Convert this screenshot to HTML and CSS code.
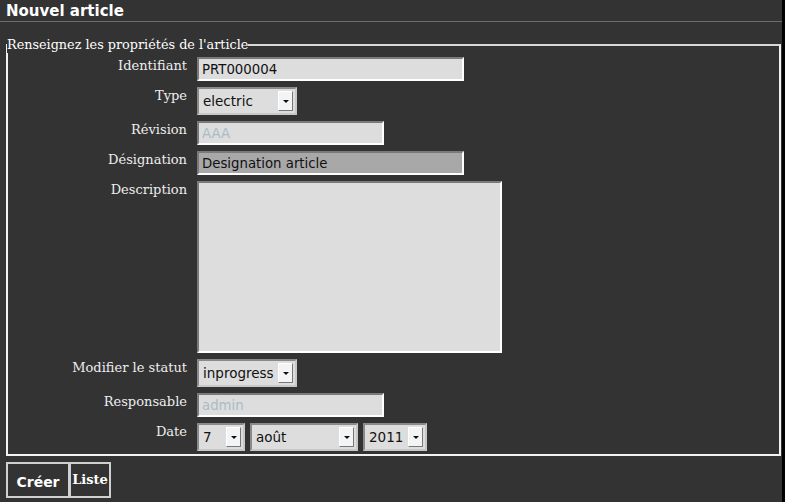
FILE: index.html
```html
<!DOCTYPE html>
<html lang="fr">
<head>
<meta charset="utf-8">
<title>Nouvel article</title>
<link rel="stylesheet" href="styles.css">
</head>
<body>
<div class="page">
  <h1 class="title">Nouvel article</h1>
  <form class="form">
    <fieldset class="props">
      <legend class="legend">Renseignez les propriétés de l'article</legend>
      <div class="row">
        <label class="lbl">Identifiant</label>
        <input class="field w-long" type="text" value="PRT000004">
      </div>
      <div class="row">
        <label class="lbl">Type</label>
        <span class="select w-sel"><span class="val">electric</span><span class="arrow"></span></span>
      </div>
      <div class="row">
        <label class="lbl">Révision</label>
        <input class="field w-mid" type="text" placeholder="AAA">
      </div>
      <div class="row">
        <label class="lbl">Désignation</label>
        <input class="field w-long dark" type="text" value="Designation article">
      </div>
      <div class="row">
        <label class="lbl">Description</label>
        <textarea class="field area"></textarea>
      </div>
      <div class="row">
        <label class="lbl">Modifier le statut</label>
        <span class="select w-sel"><span class="val">inprogress</span><span class="arrow"></span></span>
      </div>
      <div class="row">
        <label class="lbl">Responsable</label>
        <input class="field w-mid" type="text" placeholder="admin">
      </div>
      <div class="row">
        <label class="lbl">Date</label>
        <div class="dates">
          <span class="select w-day"><span class="val">7</span><span class="arrow"></span></span>
          <span class="select w-month"><span class="val">août</span><span class="arrow"></span></span>
          <span class="select w-year"><span class="val">2011</span><span class="arrow"></span></span>
        </div>
      </div>
    </fieldset>
    <div class="buttons">
      <button class="btn create" type="button">Créer</button>
      <button class="btn list" type="button">Liste</button>
    </div>
  </form>
</div>
</body>
</html>
```
FILE: styles.css
```css
html {
  background: #000;
  margin: 0;
  padding: 0;
}
body {
  margin: 0;
  padding: 0;
}
.page {
  width: 782px;
  height: 502px;
  background: #333;
  color: #eee;
  overflow: hidden;
}
.title {
  margin: 0;
  padding: 3px 0 0 6px;
  height: 18px;
  font: bold 15px/16px "DejaVu Sans", sans-serif;
  color: #fff;
  border-bottom: 1px solid #6e6e6e;
}
.form {
  margin: 0;
  padding: 15px 1px 0 6px;
}
.props {
  margin: 0;
  padding: 4px 0 3px 0;
  border: 2px solid #f2f2f2;
  border-top-color: #d8d8d8;
  display: flex;
  flex-direction: column;
  gap: 6px;
}
.legend {
  padding: 0;
  margin: 0 0 0 -1px;
  font: 12.8px/16px "DejaVu Serif", serif;
  color: #fff;
}
.row {
  display: flex;
  align-items: flex-start;
  gap: 10px;
}
.lbl {
  width: 179px;
  flex: none;
  text-align: right;
  font: 13px/16px "DejaVu Serif", serif;
  color: #eee;
  padding-top: 1px;
}
.field {
  box-sizing: border-box;
  height: 24px;
  margin: 0;
  padding: 2px 3px;
  border: 2px solid;
  border-color: #7a7a7a #fff #fff #7a7a7a;
  background: #ddd;
  color: #111;
  font: 13.3px/16px "DejaVu Sans", sans-serif;
  outline: none;
}
.field::placeholder {
  color: #a9bcc6;
}
.w-long { width: 267px; }
.w-mid { width: 187px; }
.dark { background: #a8a8a8; }
.area {
  width: 305px;
  height: 172px;
  resize: none;
}
.select {
  box-sizing: border-box;
  height: 28px;
  display: flex;
  align-items: center;
  padding: 0 2px 0 4px;
  border: 2px solid;
  border-color: #8a8a8a #c8c8c8 #c8c8c8 #8a8a8a;
  background: #ddd;
  color: #111;
  font: 13.5px/16px "DejaVu Sans", sans-serif;
}
.select .val {
  flex: 1;
  white-space: nowrap;
}
.arrow {
  box-sizing: border-box;
  width: 15px;
  height: 20px;
  flex: none;
  background: #f2f4f6;
  border: 1px solid;
  border-color: #fff #777 #777 #fff;
  display: flex;
  align-items: center;
  justify-content: center;
}
.arrow::before {
  content: "";
  width: 0;
  height: 0;
  margin-top: 1px;
  border-left: 3px solid transparent;
  border-right: 3px solid transparent;
  border-top: 3px solid #111;
}
.w-sel { width: 100px; }
.w-day { width: 48px; }
.w-month { width: 108px; }
.w-year { width: 64px; }
.dates {
  display: flex;
  gap: 5px;
}
.buttons {
  display: flex;
  margin-top: 6px;
}
.btn {
  box-sizing: border-box;
  height: 36px;
  margin: 0;
  background: #333;
  color: #fff;
  border: 2px solid #d0d0d0;
  cursor: pointer;
}
.create {
  width: 64px;
  font: bold 14px "DejaVu Sans", sans-serif;
  padding: 4px 0 0;
}
.list {
  width: 42px;
  margin-left: -1px;
  padding: 0 0 2px;
  font: bold 13px "DejaVu Serif", serif;
}
```
